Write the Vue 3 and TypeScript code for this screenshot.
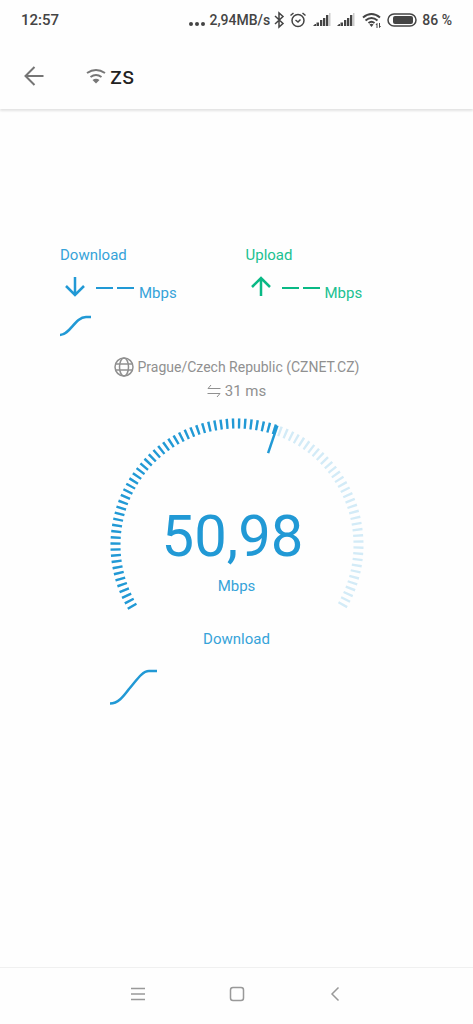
<script setup lang="ts">
interface Stat {
  name: string
  kind: 'down' | 'up'
  arrow: string
}

const stats: Stat[] = [
  { name: 'Download', kind: 'down', arrow: 'M10 1V19M1 10L10 19L19 10' },
  { name: 'Upload', kind: 'up', arrow: 'M10 20V2M1 11L10 2L19 11' },
]

const speed = 50.98
const speedText = speed.toFixed(2).replace('.', ',')

const centre = 127
const radius = 121.5
const start = -0.85
const sweep = 240
const reached = 139

// Point on the dial, measured in degrees clockwise from its lower left end.
function point(deg: number, r: number): string {
  const a = ((deg + 150) * Math.PI) / 180
  return `${(centre + r * Math.cos(a)).toFixed(2)} ${(centre + r * Math.sin(a)).toFixed(2)}`
}

const dial = `M${point(start, radius)}A${radius} ${radius} 0 1 1 ${point(sweep, radius)}`
const progress = `M${point(start, radius)}A${radius} ${radius} 0 0 1 ${point(reached, radius)}`
const needle = `M${point(138.7, 97)}L${point(138.7, 126)}`
</script>

<template>
  <div class="screen">
    <div class="status">
      <span class="clock">12:57</span>
      <span class="indicators">
        <svg class="dots" width="18" height="18" viewBox="0 0 18 18" aria-hidden="true">
          <circle cx="3" cy="13" r="2" /><circle cx="9" cy="13" r="2" /><circle cx="15" cy="13" r="2" />
        </svg>
        <span class="rate">2,94MB/s</span>
        <svg class="line bluetooth" width="14" height="18" viewBox="0 0 14 18" aria-hidden="true">
          <path d="M3 5L11 12.5L7 16V2L11 5.5L3 13" />
        </svg>
        <svg class="line alarm" width="18" height="18" viewBox="0 0 18 18" aria-hidden="true">
          <circle cx="9" cy="9.5" r="6" /><path d="M6.5 9L9 11L11.5 8.5M1.5 4.5L4.5 2M16.5 4.5L13.5 2" />
        </svg>
        <svg v-for="n in 2" :key="n" class="signal" width="18" height="18" viewBox="0 0 18 18" aria-hidden="true">
          <path d="M0 15H3V13H2Z" /><path d="M3.500 11.500H6V15H3.500ZM7 9H9.300V15H7ZM10 7H12.300V15H10ZM13 4H15.300V15H13Z" />
          <path class="off" d="M16 2H17.500V15H16Z" />
        </svg>
        <svg class="line wifi-status" width="20" height="18" viewBox="0 0 20 18" aria-hidden="true">
          <path d="M1 6.5Q9.500 -.5 18 6.500M3.500 9.500Q9.500 4.500 15.500 9.500M6.500 12Q9.500 9.500 12.500 12" />
          <path class="fill" d="M7.500 13.500Q9.500 12 11.500 13.500L9.500 16Z" />
          <path class="tiny" d="M15 12.500V17M14 14L15 12.500M17.500 12V16.500L18.500 15" />
        </svg>
        <svg class="battery" width="30" height="14" viewBox="0 0 30 14" aria-hidden="true">
          <rect class="shell" x="1" y="1" width="28" height="12" rx="6" />
          <rect x="6" y="3" width="20" height="8" rx="2" />
        </svg>
        <span class="percent">86 %</span>
      </span>
    </div>

    <header class="bar">
      <button class="back" type="button" aria-label="Back">
        <svg width="20" height="20" viewBox="0 0 20 20" aria-hidden="true"><path d="M19.500 10H2M10.500 1L1.500 10L10.500 19" /></svg>
      </button>
      <svg class="wifi" width="20" height="16" viewBox="0 0 20 16" aria-hidden="true">
        <path d="M1 5Q10 -1 19 5M4.500 9Q10 5 15.500 9" /><path class="fill" d="M6.500 12Q10 9.500 13.500 12L10 15.500Z" />
      </svg>
      <h1>zs</h1>
    </header>

    <main>
      <section class="stats">
        <div v-for="s in stats" :key="s.name" class="stat" :class="s.kind">
          <h2>{{ s.name }}</h2>
          <div class="reading">
            <svg class="arrow" width="20" height="21" viewBox="0 0 20 21" aria-hidden="true"><path :d="s.arrow" /></svg>
            <span class="blank"><i></i><i></i></span>
            <span class="unit">Mbps</span>
          </div>
          <svg v-if="s.kind === 'down'" class="curve" width="32" height="22" viewBox="0 0 32 22" aria-hidden="true">
            <path d="M0 20C10 20 15 2 26 2H31" />
          </svg>
        </div>
      </section>

      <section class="server">
        <p>
          <svg class="globe" width="20" height="20" viewBox="0 0 20 20" aria-hidden="true">
            <circle cx="10" cy="10" r="9" /><ellipse cx="10" cy="10" rx="4.500" ry="9" /><path d="M1.500 7H18.500M1.500 13H18.500" />
          </svg>
          <span class="place">Prague/Czech Republic (CZNET.CZ)</span>
        </p>
        <p class="ping">
          <svg width="14" height="14" viewBox="0 0 14 14" aria-hidden="true"><path d="M4 1L1 4.500H13.500M.5 9.500H13L10 13" /></svg>
          <span>31 ms</span>
        </p>
      </section>

      <section class="gauge">
        <svg class="dial" viewBox="0 0 254 194" aria-hidden="true">
          <path class="ticks rest" :d="dial" :pathLength="sweep - start" />
          <path class="ticks done" :d="progress" :pathLength="reached - start" />
          <path class="needle" :d="needle" />
        </svg>
        <div class="value">
          <strong>{{ speedText }}</strong>
          <span>Mbps</span>
        </div>
        <p class="phase">Download</p>
        <svg class="trend" width="48" height="37" viewBox="0 0 48 37" aria-hidden="true">
          <path d="M0 34.500C8 34.500 13 28 19 20C26 12 32 2 39 2H47" />
        </svg>
      </section>
    </main>

    <nav class="system">
      <button type="button" aria-label="Recent apps">
        <svg width="16" height="16" viewBox="0 0 16 16" aria-hidden="true"><path d="M1 2.500H15M1 8H15M1 13.500H15" /></svg>
      </button>
      <button type="button" aria-label="Home">
        <svg width="16" height="16" viewBox="0 0 16 16" aria-hidden="true"><rect x="1.500" y="1.500" width="13" height="13" rx="2.500" /></svg>
      </button>
      <button type="button" aria-label="Go back">
        <svg width="16" height="16" viewBox="0 0 16 16" aria-hidden="true"><path d="M11.500 1.500L5 8L11.500 14.500" /></svg>
      </button>
    </nav>
  </div>
</template>

<style>
body {
  background: #fefefe;
}
</style>

<style scoped>
.screen {
  display: flex;
  flex-direction: column;
  min-height: 100vh;
  font-family: Roboto, "Liberation Sans", sans-serif;
  font-size: 15px;
  line-height: 20px;
}
svg {
  display: block;
  flex: none;
  fill: none;
}
h1, h2, p {
  margin: 0;
  font-weight: 400;
}
button {
  display: flex;
  padding: 0;
  border: 0;
  background: none;
}
.status {
  display: flex;
  justify-content: space-between;
  align-items: center;
  height: 40px;
  padding: 0 21px;
  color: #444;
  font-weight: 500;
}
.clock {
  font-size: 15px;
}
.indicators {
  display: flex;
  align-items: center;
  font-size: 14px;
}
.dots, .signal, .battery, .fill {
  fill: #444;
}
.rate {
  margin-left: 4px;
}
.line {
  stroke: #444;
  stroke-width: 1.5;
}
.bluetooth {
  margin-left: 2px;
}
.alarm {
  margin-left: 3px;
}
.signal {
  margin-left: 6px;
}
.off {
  fill: #ccc;
}
.wifi-status {
  margin-left: 7px;
  stroke-width: 2;
}
.line .fill {
  stroke: none;
}
.tiny {
  stroke-width: 1;
}
.battery {
  margin: 0 5px;
}
.shell {
  fill: none;
  stroke: #444;
  stroke-width: 1.5;
}
.bar {
  display: flex;
  align-items: center;
  height: 69px;
  padding: 2px 24px 0;
  box-sizing: border-box;
  box-shadow: 0 2px 2px #e4e4e4;
}
.back svg {
  stroke: #757575;
  stroke-width: 2;
}
.wifi {
  margin: 0 4px 0 42px;
  stroke: #777;
  stroke-width: 2;
}
.wifi .fill {
  fill: #777;
  stroke: none;
}
h1 {
  color: #222;
  font-size: 24px;
  line-height: 28px;
}
main {
  flex: 1;
  padding-top: 136px;
}
.stats {
  display: grid;
  grid-template-columns: 1fr 1fr;
  padding: 0 42px 0 60px;
}
.stat h2 {
  font-size: 15px;
}
.down, .gauge {
  color: #2199d5;
}
.up {
  color: #09b985;
}
.down h2, .down .unit, .gauge span, .phase {
  color: #36a3d9;
}
.up h2, .up .unit {
  color: #20c191;
}
.reading {
  display: flex;
  align-items: center;
  gap: 5px;
  height: 21px;
  margin-top: 11px;
  padding-left: 5px;
}
.arrow {
  stroke: currentColor;
  stroke-width: 2.5;
}
.blank {
  display: flex;
  gap: 4px;
  padding: 2px 0 0 6px;
}
.blank i {
  width: 17px;
  height: 2px;
  background: currentColor;
}
.unit {
  padding-top: 12px;
}
.curve, .trend {
  stroke: currentColor;
  stroke-width: 2.5;
}
.curve {
  margin-top: 18px;
}
.server {
  margin-top: 20px;
  color: #909090;
}
.server p {
  display: flex;
  justify-content: center;
  align-items: center;
  gap: 4px;
}
.place {
  font-size: 14px;
}
.server svg {
  stroke: currentColor;
  stroke-width: 1;
}
.server .globe {
  stroke-width: 1.5;
}
.server .ping {
  margin-top: 4px;
}
.gauge {
  display: grid;
  justify-items: center;
  width: 254px;
  margin: 17px auto 0;
}
.dial {
  grid-area: 1 / 1;
  width: 100%;
}
.ticks {
  stroke: currentColor;
  stroke-width: 10;
  stroke-dasharray: 1.110 1.710;
}
.rest {
  stroke: #d3ebf7;
}
.needle {
  stroke: currentColor;
  stroke-width: 2.5;
}
.value {
  display: flex;
  grid-area: 1 / 1;
  flex-direction: column;
  align-items: center;
  padding-top: 88px;
}
.value strong {
  padding-right: 8px;
  font-size: 58px;
  font-weight: 400;
  line-height: 60px;
}
.value span {
  margin-top: 10px;
}
.phase {
  margin-top: 17px;
}
.trend {
  justify-self: start;
  margin-top: 20px;
}
.system {
  display: flex;
  justify-content: space-between;
  align-items: center;
  height: 57px;
  padding: 0 130px 4px;
  box-sizing: border-box;
  border-top: 1px solid #f0f0f0;
}
.system svg {
  stroke: #999;
  stroke-width: 1.5;
}
</style>
